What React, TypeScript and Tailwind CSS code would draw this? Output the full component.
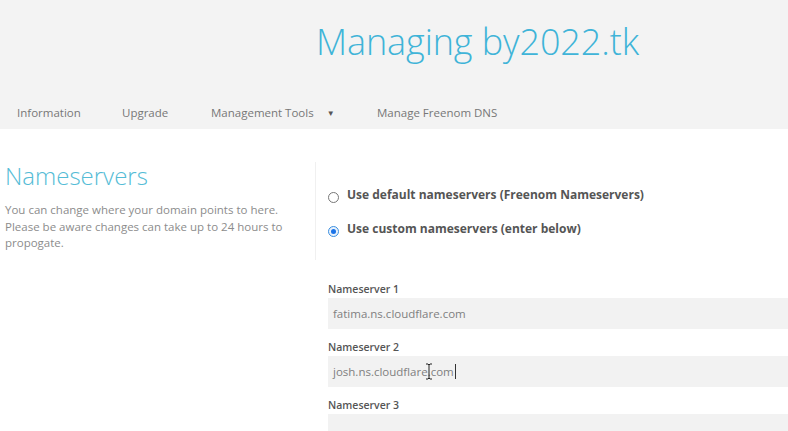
import { type ReactNode } from "react";

const NAV = ["Information", "Upgrade", "Management Tools", "Manage Freenom DNS"];

function Field({ label, value, caret }: { label: string; value: string; caret?: boolean }) {
  return (
    <div className="flex flex-col">
      <label className="text-[10.5px] font-semibold text-[#555] leading-[14px] mb-[2px]">{label}</label>
      <div className="relative h-[31px] bg-[#f2f2f2] pl-[5px] flex items-center text-[11.5px] text-[#808080]">
        {value}
        {caret && (
          <>
            <span className="inline-block w-px h-[15px] bg-[#333] ml-[1px]" />
            {/* mouse I-beam over the text */}
            <svg className="absolute left-[97px] top-[7px]" width="8" height="17" viewBox="0 0 8 17">
              <path d="M1 1h2l1 1 1-1h2M4 2v13M1 16h2l1-1 1 1h2" fill="none" stroke="#222" strokeWidth="1" />
            </svg>
          </>
        )}
      </div>
    </div>
  );
}

function Radio({ checked, children }: { checked?: boolean; children: ReactNode }) {
  return (
    <div className="flex items-center gap-[8px]">
      <span
        className={`mt-[5px] w-[11px] h-[11px] rounded-full border flex items-center justify-center ${
          checked ? "border-[#3b8fe0] bg-[#e8f2fd]" : "border-[#777] bg-white"
        }`}
      >
        {checked && <span className="w-[5px] h-[5px] rounded-full bg-[#1a73e8]" />}
      </span>
      <span className="text-[12px] font-bold text-[#555]">{children}</span>
    </div>
  );
}

export default function App() {
  return (
    <div className="w-[788px] h-[431px] overflow-hidden bg-white" style={{ fontFamily: "'Open Sans', sans-serif" }}>
      <header className="bg-[#f3f3f3] h-[129px] flex flex-col">
        <h1 className="pl-[316px] pt-[17px] text-[36px] font-light text-[#3fb4d8] leading-[50px] tracking-[-0.1px]">
          Managing by2022.tk
        </h1>
        <nav className="mt-auto mb-[7px] flex items-center pl-[17px] text-[11.5px] text-[#777] h-[18px]">
          <span className="w-[105px]">{NAV[0]}</span>
          <span className="w-[89px]">{NAV[1]}</span>
          <span className="flex items-center w-[166px]">
            {NAV[2]}
            <span className="ml-[13px] text-[8px] text-[#555]">▼</span>
          </span>
          <span>{NAV[3]}</span>
        </nav>
      </header>

      <main className="flex pt-[33px]">
        <section className="w-[316px] pl-[5px] pr-[10px] border-r border-[#f0f0f0] h-[98px]">
          <h2 className="text-[24px] font-light text-[#55bcd6] leading-[28px]">Nameservers</h2>
          <p className="mt-[12px] text-[11.5px] leading-[16.5px] text-[#8c8c8c]">
            You can change where your domain points to here.
            <br />
            Please be aware changes can take up to 24 hours to propogate.
          </p>
        </section>

        <section className="flex-1 pl-[12px]">
          <div className="pt-[24px] flex flex-col gap-[16px]">
            <Radio>Use default nameservers (Freenom Nameservers)</Radio>
            <Radio checked>Use custom nameservers (enter below)</Radio>
          </div>
          <div className="mt-[44px] flex flex-col gap-[11px]">
            <Field label="Nameserver 1" value="fatima.ns.cloudflare.com" />
            <Field label="Nameserver 2" value="josh.ns.cloudflare.com" caret />
            <Field label="Nameserver 3" value="" />
          </div>
        </section>
      </main>
    </div>
  );
}
